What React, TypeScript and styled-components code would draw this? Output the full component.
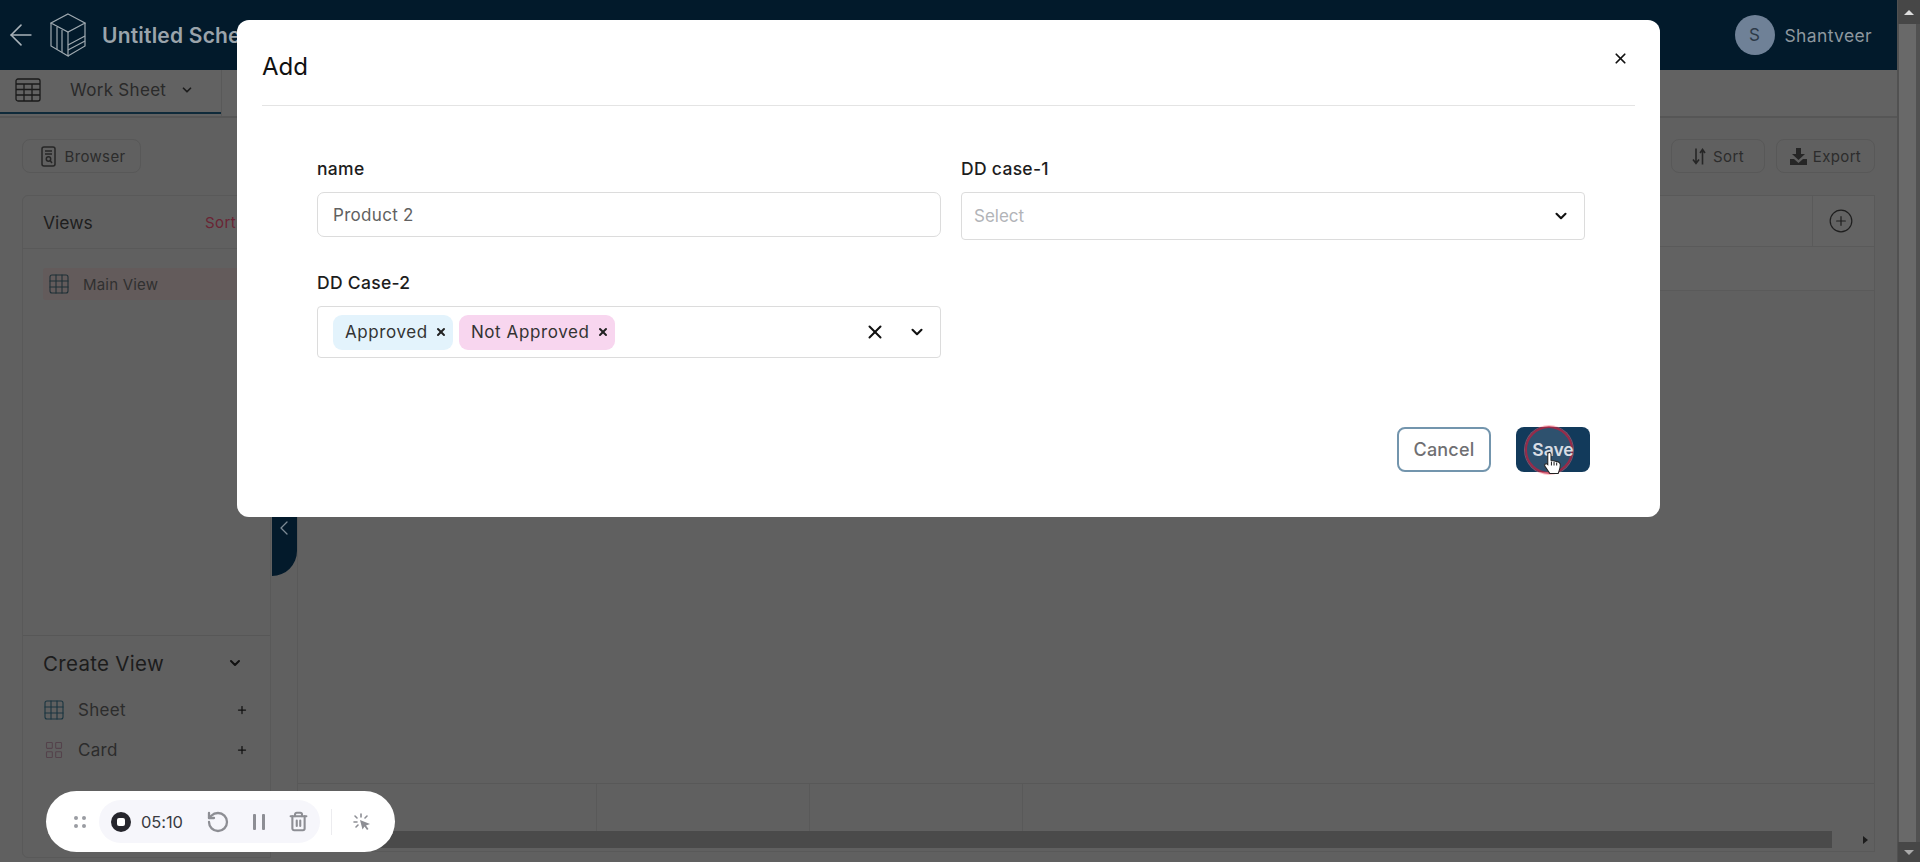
import React from "react";
import styled, { createGlobalStyle } from "styled-components";
import { ArrowLeft, ChevronDown, ChevronLeft, Plus, X, RotateCcw, Trash2, Grid3x3, LayoutGrid, CirclePlus } from "lucide-react";

const font = `Inter, "Noto Sans", "Liberation Sans", sans-serif`;

const Global = createGlobalStyle`
  html, body { margin: 0; padding: 0; height: 100%; overflow: hidden; background: #606060; }
  #root { height: 862px; }
  * { box-sizing: border-box; }
`;

const Page = styled.div`
  position: relative;
  width: 1920px;
  height: 862px;
  overflow: hidden;
  display: flex;
  background: #606060;
  font-family: ${font};
  color: #222;
`;

const Main = styled.div`
  flex: 1;
  min-width: 0;
  display: flex;
  flex-direction: column;
  height: 862px;
`;

const Header = styled.header`
  height: 70px;
  flex: none;
  background: #021a2b;
  display: flex;
  align-items: center;
  padding: 0 25px 0 4px;
  color: #a9b2b9;
`;

const Cube = styled.svg`
  width: 40px;
  height: 44px;
  margin-left: 10px;
  margin-right: 14px;
`;

const Title = styled.div`
  font-size: 21px;
  font-weight: 600;
  color: #9aa4ab;
  white-space: nowrap;
  letter-spacing: 0.2px;
`;

const Spacer = styled.div`
  flex: 1;
`;

const Avatar = styled.div`
  width: 40px;
  height: 40px;
  border-radius: 50%;
  background: #6f8197;
  color: #2d3a48;
  font-size: 17px;
  display: flex;
  align-items: center;
  justify-content: center;
  margin-right: 10px;
`;

const UserName = styled.div`
  font-size: 17.5px;
  letter-spacing: 0.35px;
  color: #8d979e;
`;

const TabBar = styled.div`
  height: 48px;
  flex: none;
  display: flex;
  background: #626262;
  border-bottom: 2px solid #565656;
`;

const Tab = styled.div`
  width: 222px;
  height: 44px;
  display: flex;
  align-items: center;
  padding: 0 0 3px 15px;
  font-size: 17px;
  letter-spacing: 0.3px;
  color: #2a2a2a;
  border-bottom: 2px solid #0f2a3a;
  position: relative;
  &::after {
    content: "";
    position: absolute;
    right: 0;
    top: 0;
    height: 46px;
    width: 1px;
    background: #595959;
  }
`;

const TabLabel = styled.span`
  width: 96px;
  margin-left: 29px;
  margin-right: 14px;
  white-space: nowrap;
`;

const Content = styled.div`
  flex: 1;
  min-height: 0;
  display: flex;
  flex-direction: column;
  padding: 21px 22px 4px 22px;
`;

const Toolbar = styled.div`
  display: flex;
  align-items: center;
  gap: 11px;
  height: 34px;
  flex: none;
`;

const ToolButton = styled.div<{ $w: number; $gap: number; $pad?: number }>`
  width: ${(p) => p.$w}px;
  height: 34px;
  border: 1px solid #585858;
  border-radius: 8px;
  display: flex;
  align-items: center;
  justify-content: center;
  gap: ${(p) => p.$gap}px;
  padding-left: ${(p) => p.$pad ?? 0}px;
  font-size: 15px;
  letter-spacing: 0.35px;
  color: #2c2c2c;
`;

const Body = styled.div`
  flex: 1;
  min-height: 0;
  display: flex;
  margin-top: 22px;
`;

const Sidebar = styled.aside`
  width: 249px;
  flex: none;
  display: flex;
  flex-direction: column;
  border: 1px solid #595959;
  border-radius: 6px 0 0 6px;
`;

const ViewsHead = styled.div`
  height: 53px;
  flex: none;
  display: flex;
  align-items: center;
  justify-content: space-between;
  padding: 0 20px;
  font-size: 17.5px;
  color: #1e1e1e;
  border-bottom: 1px solid #595959;
`;

const SortLink = styled.span`
  font-size: 15px;
  letter-spacing: 0.4px;
  color: #6a2434;
  margin-right: 14px;
`;

const ViewRow = styled.div`
  margin: 19px 20px 0 20px;
  height: 32px;
  flex: none;
  background: #635b5b;
  display: flex;
  align-items: center;
  gap: 12px;
  padding-left: 4px;
  font-size: 15px;
  letter-spacing: 0.2px;
  color: #303030;
  border-radius: 3px;
`;

const SideGap = styled.div`
  flex: 1;
`;

const CreatePanel = styled.div`
  border-top: 1px solid #575757;
  height: 222px;
  padding: 0 22px 0 20px;
  flex: none;
`;

const CreateHead = styled.div`
  height: 54px;
  display: flex;
  align-items: center;
  justify-content: space-between;
  padding-right: 5px;
  font-size: 20.5px;
  letter-spacing: 0.3px;
  color: #1c1c1c;
`;

const CreateRow = styled.div`
  height: 40px;
  display: flex;
  align-items: center;
  gap: 12px;
  margin-left: -1px;
  font-size: 17px;
  letter-spacing: 0.3px;
  color: #2c2c2c;
`;

const CreateIcon = styled.span`
  width: 24px;
  height: 24px;
  display: flex;
  align-items: center;
  justify-content: center;
`;

const CreateLabel = styled.span`
  flex: 1;
`;

const CollapseTab = styled.div`
  position: absolute;
  left: 272px;
  top: 500px;
  width: 25px;
  height: 76px;
  background: #031a2b;
  border-radius: 0 0 25px 0;
  display: flex;
  align-items: flex-start;
  padding-top: 16px;
  color: #7d8a94;
`;

const Grid = styled.section`
  flex: 1;
  min-width: 0;
  display: flex;
  flex-direction: column;
  margin-left: 26px;
  margin-bottom: 6px;
  border: 1px solid #595959;
`;

const GridHead = styled.div`
  height: 51px;
  flex: none;
  display: flex;
  justify-content: flex-end;
  background: #636363;
  border-bottom: 1px solid #5a5a5a;
`;

const AddColumn = styled.div`
  width: 62px;
  border-left: 1px solid #5a5a5a;
  display: flex;
  align-items: center;
  justify-content: center;
  padding-right: 6px;
  color: #1e1e1e;
`;

const GridRow = styled.div`
  height: 44px;
  flex: none;
  border-bottom: 1px solid #5a5a5a;
  background: #626262;
`;

const GridFill = styled.div`
  flex: 1;
`;

const Totals = styled.div`
  height: 48px;
  flex: none;
  border-top: 1px solid #585858;
  display: flex;
`;

const TotalCell = styled.div<{ $w: number }>`
  width: ${(p) => p.$w}px;
  border-right: 1px solid #595959;
`;

const HScroll = styled.div`
  height: 17px;
  flex: none;
  margin-bottom: 3px;
  display: flex;
  align-items: center;
`;

const HThumb = styled.div`
  flex: 1;
  height: 17px;
  background: #4a4a4a;
`;

const HEnd = styled.div`
  width: 42px;
  display: flex;
  justify-content: flex-end;
  padding-right: 6px;
`;

const ArrowRight = styled.div`
  width: 0;
  height: 0;
  border-left: 5px solid #1c1c1c;
  border-top: 4.5px solid transparent;
  border-bottom: 4.5px solid transparent;
`;

const VScroll = styled.div`
  width: 23px;
  flex: none;
  height: 862px;
  display: flex;
  flex-direction: column;
  background: #515151;
  padding-left: 1px;
`;

const VBtn = styled.div<{ $down?: boolean }>`
  height: ${(p) => (p.$down ? 20 : 24)}px;
  background: #474747;
  display: flex;
  align-items: center;
  justify-content: center;
  &::before {
    content: "";
    width: 0;
    height: 0;
    border-left: 5px solid transparent;
    border-right: 5px solid transparent;
    ${(p) => (p.$down ? "border-top: 5px solid #aaa;" : "border-bottom: 5px solid #ddd;")}
  }
`;

const VTrack = styled.div`
  flex: 1;
  width: 17px;
  margin-left: 1px;
  background: #696969;
`;

const Overlay = styled.div`
  position: absolute;
  left: 237px;
  top: 20px;
  width: 1423px;
  height: 497px;
  background: #fff;
  border-radius: 12px;
  padding: 0 25px;
  display: flex;
  flex-direction: column;
  color: #1a1a1a;
`;

const ModalHead = styled.div`
  height: 86px;
  flex: none;
  display: flex;
  align-items: center;
  justify-content: space-between;
  padding-top: 8px;
  border-bottom: 1px solid #e4e4e4;
  font-size: 24px;
  color: #111;
`;

const CloseBtn = styled.div`
  display: flex;
  color: #111;
  margin-right: 6px;
  margin-bottom: 17px;
`;

const Form = styled.div`
  display: grid;
  grid-template-columns: 624px 624px;
  column-gap: 20px;
  row-gap: 30px;
  padding: 50px 0 0 55px;
`;

const Field = styled.div`
  display: flex;
  flex-direction: column;
`;

const Label = styled.label`
  font-size: 17.5px;
  font-weight: 500;
  letter-spacing: 0.3px;
  height: 24px;
  line-height: 26px;
  margin-bottom: 12px;
  color: #1d1d1d;
`;

const Input = styled.div`
  height: 45px;
  border: 1px solid #dcdcdc;
  border-radius: 7px;
  display: flex;
  align-items: center;
  padding: 0 15px;
  font-size: 17px;
  letter-spacing: 0.3px;
  color: #616161;
`;

const SelectBox = styled.div`
  height: 48px;
  border: 1px solid #dcdcdc;
  border-radius: 4px;
  display: flex;
  align-items: center;
  justify-content: space-between;
  padding: 0 14px 0 12px;
  font-size: 17px;
  color: #b2b4b8;
`;

const MultiBox = styled.div`
  height: 52px;
  border: 1px solid #dcdcdc;
  border-radius: 4px;
  display: flex;
  align-items: center;
  gap: 6px;
  padding: 0 14px 0 15px;
`;

const Chip = styled.span<{ $bg: string }>`
  height: 35px;
  border-radius: 9px;
  background: ${(p) => p.$bg};
  display: flex;
  align-items: center;
  gap: 7px;
  padding: 0 6px 0 12px;
  font-size: 17px;
  letter-spacing: 0.6px;
  color: #333;
`;

const MultiActions = styled.div`
  margin-left: auto;
  display: flex;
  align-items: center;
  gap: 22px;
  color: #111;
`;

const Footer = styled.div`
  margin-top: auto;
  display: flex;
  justify-content: flex-end;
  gap: 25px;
  padding: 0 45px 45px 0;
`;

const Cancel = styled.div`
  width: 94px;
  height: 45px;
  border: 2px solid #7395ad;
  border-radius: 8px;
  display: flex;
  align-items: center;
  justify-content: center;
  font-size: 18px;
  font-weight: 500;
  letter-spacing: 0.2px;
  color: #6f6f72;
`;

const Save = styled.div`
  position: relative;
  width: 74px;
  height: 45px;
  background: #123a5b;
  border-radius: 8px;
  display: flex;
  align-items: center;
  justify-content: center;
  font-size: 17.5px;
  font-weight: 600;
  color: #d8dde4;
`;

const ClickRing = styled.div`
  position: absolute;
  left: 9px;
  top: -1px;
  width: 48px;
  height: 48px;
  border-radius: 50%;
  background: rgba(255, 255, 255, 0.12);
  border: 2px solid rgba(190, 30, 60, 0.75);
  box-shadow: 0 0 0 1px rgba(255, 120, 130, 0.45);
`;

const Cursor = styled.svg`
  position: absolute;
  left: 27px;
  top: 24px;
  width: 20px;
  height: 24px;
`;

const SaveLabel = styled.span`
  position: relative;
`;

const Recorder = styled.div`
  position: absolute;
  left: 46px;
  top: 791px;
  width: 349px;
  height: 61px;
  border-radius: 31px;
  background: #fff;
  display: flex;
  align-items: center;
  padding-left: 28px;
  color: #8d8e94;
`;

const Handle = styled.svg`
  width: 14px;
  height: 14px;
  margin-right: 11px;
`;

const RecPill = styled.div`
  width: 221px;
  height: 43px;
  border-radius: 22px;
  background: #f6f6fb;
  display: flex;
  align-items: center;
  padding-left: 12px;
`;

const StopDot = styled.div`
  width: 20px;
  height: 20px;
  border-radius: 50%;
  background: #25252c;
  display: flex;
  align-items: center;
  justify-content: center;
  margin-right: 10px;
  &::before {
    content: "";
    width: 8px;
    height: 8px;
    border-radius: 2px;
    background: #fff;
  }
`;

const Time = styled.span`
  font-size: 16.5px;
  color: #3a3b42;
  width: 65px;
  letter-spacing: -0.1px;
`;

const RecIcons = styled.div`
  display: flex;
  align-items: center;
  gap: 23px;
`;

const Divider = styled.div`
  width: 1px;
  height: 26px;
  background: #ececef;
  margin: 0 21px 0 11px;
`;

const Cube3D = () => (
  <Cube viewBox="0 0 40 44" fill="none" stroke="#9fa9b0" strokeWidth="1.2">
    <path d="M20 1 L37 10 L20 19 L3 10 Z" />
    <path d="M3 10 V33 L20 43 V19" />
    <path d="M37 10 V33 L20 43" />
    <path d="M9 14 V36 M14 17 V39" />
    <path d="M20 32 L37 23 M20 37 L37 28" />
  </Cube>
);

const SheetIcon = () => (
  <svg width="26" height="24" viewBox="0 0 26 24" fill="none" stroke="#1a1a1a" strokeWidth="1.3">
    <rect x="1" y="1" width="24" height="22" rx="2" />
    <path d="M1 6 H25 M1 11.5 H25 M1 17 H25 M9 6 V23 M17 6 V23" />
  </svg>
);

const BrowserIcon = () => (
  <svg width="15" height="21" viewBox="0 0 15 21" fill="none" stroke="#262626" strokeWidth="1.5">
    <rect x="1" y="1" width="13" height="19" rx="2" />
    <path d="M4 5 H11 M4 8 H11" />
    <circle cx="7.500" cy="13" r="2.200" />
    <path d="M9.300 14.800 L11 17" />
  </svg>
);

const SortIcon = () => (
  <svg width="14" height="17" viewBox="0 0 14 17" fill="none" stroke="#262626" strokeWidth="1.6">
    <path d="M4 0.500 V15 M1 11.500 L4 15.500 L7 11.500" />
    <path d="M10.500 16.500 V2 M8 5 L10.500 1.500 L13 5" />
  </svg>
);

const ExportIcon = () => (
  <svg width="17" height="17" viewBox="0 0 17 17" fill="#262626">
    <path d="M6 0 H11 V6 H15 L8.500 12 L2 6 H6 Z" />
    <path d="M0 11 H4 L8.500 15 L13 11 H17 V17 H0 Z" />
  </svg>
);

const PauseIcon = () => (
  <svg width="12" height="16" viewBox="0 0 12 16" fill="#8d8e94">
    <rect x="0" y="0" width="3" height="16" rx="1" />
    <rect x="9" y="0" width="3" height="16" rx="1" />
  </svg>
);

const ClickIcon = () => (
  <svg width="18" height="18" viewBox="0 0 18 18" fill="none" stroke="#8d8e94" strokeWidth="1.6" strokeLinecap="round">
    <path d="M8 1 V4 M2 3 L4 5 M1 9 H4 M14 3 L12 5 M3 14 L5 12" />
    <path d="M7 7 L17 11 L13 12.500 L15.500 16 L14 17 L11.500 13.500 L9.500 16.500 Z" fill="#8d8e94" stroke="none" />
  </svg>
);

export default function App() {
  return (
    <Page>
      <Global />
      <Main>
        <Header>
          <ArrowLeft size={34} strokeWidth={1.1} color="#a9b2b9" />
          <Cube3D />
          <Title>Untitled Schema</Title>
          <Spacer />
          <Avatar>S</Avatar>
          <UserName>Shantveer</UserName>
        </Header>
        <TabBar>
          <Tab>
            <SheetIcon />
            <TabLabel>Work Sheet</TabLabel>
            <ChevronDown size={14} strokeWidth={3} color="#1c1c1c" />
          </Tab>
        </TabBar>
        <Content>
          <Toolbar>
            <ToolButton $w={119} $gap={9} $pad={3}>
              <BrowserIcon />
              Browser
            </ToolButton>
            <Spacer />
            <ToolButton $w={94} $gap={7}>
              <SortIcon />
              Sort
            </ToolButton>
            <ToolButton $w={99} $gap={6}>
              <ExportIcon />
              Export
            </ToolButton>
          </Toolbar>
          <Body>
            <Sidebar>
              <ViewsHead>
                Views
                <SortLink>Sort</SortLink>
              </ViewsHead>
              <ViewRow>
                <Grid3x3 size={24} strokeWidth={1.1} color="#1f3037" />
                Main View
              </ViewRow>
              <SideGap />
              <CreatePanel>
                <CreateHead>
                  Create View
                  <ChevronDown size={16} strokeWidth={3} color="#111" />
                </CreateHead>
                <CreateRow>
                  <CreateIcon>
                    <Grid3x3 size={24} strokeWidth={1.1} color="#1a3540" />
                  </CreateIcon>
                  <CreateLabel>Sheet</CreateLabel>
                  <Plus size={12} strokeWidth={2.5} color="#111" />
                </CreateRow>
                <CreateRow>
                  <CreateIcon>
                    <LayoutGrid size={20} strokeWidth={1.3} color="#54424b" />
                  </CreateIcon>
                  <CreateLabel>Card</CreateLabel>
                  <Plus size={12} strokeWidth={2.5} color="#111" />
                </CreateRow>
              </CreatePanel>
            </Sidebar>
            <Grid>
              <GridHead>
                <AddColumn>
                  <CirclePlus size={26} strokeWidth={1.1} />
                </AddColumn>
              </GridHead>
              <GridRow />
              <GridFill />
              <Totals>
                <TotalCell $w={299} />
                <TotalCell $w={213} />
                <TotalCell $w={213} />
              </Totals>
              <HScroll>
                <HThumb />
                <HEnd>
                  <ArrowRight />
                </HEnd>
              </HScroll>
            </Grid>
          </Body>
        </Content>
      </Main>
      <VScroll>
        <VBtn />
        <VTrack />
        <VBtn $down />
      </VScroll>

      <CollapseTab>
        <ChevronLeft size={24} strokeWidth={1.3} />
      </CollapseTab>

      <Overlay>
        <ModalHead>
          Add
          <CloseBtn>
            <X size={17} strokeWidth={2.4} />
          </CloseBtn>
        </ModalHead>
        <Form>
          <Field>
            <Label>name</Label>
            <Input>Product 2</Input>
          </Field>
          <Field>
            <Label>DD case-1</Label>
            <SelectBox>
              Select
              <ChevronDown size={18} strokeWidth={2.8} color="#111" />
            </SelectBox>
          </Field>
          <Field>
            <Label>DD Case-2</Label>
            <MultiBox>
              <Chip $bg="#e3f3fc">
                Approved
                <X size={12} strokeWidth={4} color="#222" />
              </Chip>
              <Chip $bg="#f8d6ef">
                Not Approved
                <X size={12} strokeWidth={4} color="#222" />
              </Chip>
              <MultiActions>
                <X size={22} strokeWidth={2.2} />
                <ChevronDown size={18} strokeWidth={2.8} />
              </MultiActions>
            </MultiBox>
          </Field>
        </Form>
        <Footer>
          <Cancel>Cancel</Cancel>
          <Save>
            <ClickRing />
            <SaveLabel>Save</SaveLabel>
            <Cursor viewBox="0 0 19 23">
              <path
                d="M6 1.500c1 0 1.600.7 1.600 1.700V9l5.500 1c2 .4 3.400 1.600 3.400 3.500 0 3-1 5-2 8H6.500L2 15c-.8-1-.6-2 .2-2.500.8-.5 1.600-.2 2.300.5V3.200C4.500 2.200 5 1.500 6 1.500z"
                fill="#fff"
                stroke="#222"
                strokeWidth="1"
              />
              <path d="M8 10v4M10.500 10.500v3.500M13 11v3" stroke="#222" strokeWidth="1" />
            </Cursor>
          </Save>
        </Footer>
      </Overlay>

      <Recorder>
        <Handle viewBox="0 0 14 14" fill="#9a9ca2">
          <circle cx="2" cy="3" r="2" />
          <circle cx="10" cy="3" r="2" />
          <circle cx="2" cy="11" r="2" />
          <circle cx="10" cy="11" r="2" />
        </Handle>
        <RecPill>
          <StopDot />
          <Time>05:10</Time>
          <RecIcons>
            <RotateCcw size={24} strokeWidth={2.3} />
            <PauseIcon />
            <Trash2 size={21} strokeWidth={2.4} />
          </RecIcons>
        </RecPill>
        <Divider />
        <ClickIcon />
      </Recorder>
    </Page>
  );
}
